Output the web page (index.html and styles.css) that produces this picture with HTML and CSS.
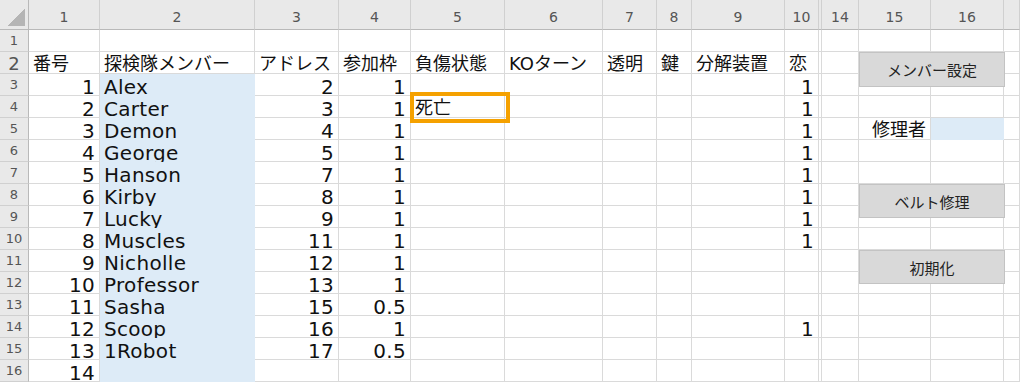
FILE: index.html
```html
<!DOCTYPE html>
<html lang="ja">
<head>
    <meta charset="UTF-8">
    <title>探検隊</title>
    <link rel="stylesheet" href="styles.css">
</head>
<body>
<div class="sheet">
    <!-- column headers -->
    <div class="row top">
        <div class="corner"></div><div>1</div><div>2</div><div>3</div><div>4</div><div>5</div><div>6</div><div>7</div><div>8</div><div>9</div><div>10</div><div class="gap"></div><div>14</div><div>15</div><div>16</div><div></div>
    </div>
    <div class="row">
        <div class="rh">1</div><div></div><div></div><div></div><div></div><div></div><div></div><div></div><div></div><div></div><div></div><div class="gap"></div><div></div><div></div><div></div><div></div>
    </div>
    <div class="row head">
        <div class="rh">2</div><div>番号</div><div>探検隊メンバー</div><div>アドレス</div><div>参加枠</div><div>負傷状態</div><div>KOターン</div><div>透明</div><div>鍵</div><div>分解装置</div><div>恋</div><div class="gap"></div><div></div><div></div><div></div><div></div>
    </div>
    <div class="row">
        <div class="rh">3</div><div class="n">1</div><div class="name">Alex</div><div class="n">2</div><div class="n">1</div><div></div><div></div><div></div><div></div><div></div><div class="n">1</div><div class="gap"></div><div></div><div></div><div></div><div></div>
    </div>
    <div class="row">
        <div class="rh">4</div><div class="n">2</div><div class="name">Carter</div><div class="n">3</div><div class="n">1</div><div class="jp">死亡</div><div></div><div></div><div></div><div></div><div class="n">1</div><div class="gap"></div><div></div><div></div><div></div><div></div>
    </div>
    <div class="row">
        <div class="rh">5</div><div class="n">3</div><div class="name">Demon</div><div class="n">4</div><div class="n">1</div><div></div><div></div><div></div><div></div><div></div><div class="n">1</div><div class="gap"></div><div></div><div class="n jp">修理者</div><div class="fill"></div><div></div>
    </div>
    <div class="row">
        <div class="rh">6</div><div class="n">4</div><div class="name">George</div><div class="n">5</div><div class="n">1</div><div></div><div></div><div></div><div></div><div></div><div class="n">1</div><div class="gap"></div><div></div><div></div><div></div><div></div>
    </div>
    <div class="row">
        <div class="rh">7</div><div class="n">5</div><div class="name">Hanson</div><div class="n">7</div><div class="n">1</div><div></div><div></div><div></div><div></div><div></div><div class="n">1</div><div class="gap"></div><div></div><div></div><div></div><div></div>
    </div>
    <div class="row">
        <div class="rh">8</div><div class="n">6</div><div class="name">Kirby</div><div class="n">8</div><div class="n">1</div><div></div><div></div><div></div><div></div><div></div><div class="n">1</div><div class="gap"></div><div></div><div></div><div></div><div></div>
    </div>
    <div class="row">
        <div class="rh">9</div><div class="n">7</div><div class="name">Lucky</div><div class="n">9</div><div class="n">1</div><div></div><div></div><div></div><div></div><div></div><div class="n">1</div><div class="gap"></div><div></div><div></div><div></div><div></div>
    </div>
    <div class="row">
        <div class="rh">10</div><div class="n">8</div><div class="name">Muscles</div><div class="n">11</div><div class="n">1</div><div></div><div></div><div></div><div></div><div></div><div class="n">1</div><div class="gap"></div><div></div><div></div><div></div><div></div>
    </div>
    <div class="row">
        <div class="rh">11</div><div class="n">9</div><div class="name">Nicholle</div><div class="n">12</div><div class="n">1</div><div></div><div></div><div></div><div></div><div></div><div></div><div class="gap"></div><div></div><div></div><div></div><div></div>
    </div>
    <div class="row">
        <div class="rh">12</div><div class="n">10</div><div class="name">Professor</div><div class="n">13</div><div class="n">1</div><div></div><div></div><div></div><div></div><div></div><div></div><div class="gap"></div><div></div><div></div><div></div><div></div>
    </div>
    <div class="row">
        <div class="rh">13</div><div class="n">11</div><div class="name">Sasha</div><div class="n">15</div><div class="n">0.5</div><div></div><div></div><div></div><div></div><div></div><div></div><div class="gap"></div><div></div><div></div><div></div><div></div>
    </div>
    <div class="row">
        <div class="rh">14</div><div class="n">12</div><div class="name">Scoop</div><div class="n">16</div><div class="n">1</div><div></div><div></div><div></div><div></div><div></div><div class="n">1</div><div class="gap"></div><div></div><div></div><div></div><div></div>
    </div>
    <div class="row">
        <div class="rh">15</div><div class="n">13</div><div class="name">1Robot</div><div class="n">17</div><div class="n">0.5</div><div></div><div></div><div></div><div></div><div></div><div></div><div class="gap"></div><div></div><div></div><div></div><div></div>
    </div>
    <div class="row">
        <div class="rh">16</div><div class="n">14</div><div class="name"></div><div></div><div></div><div></div><div></div><div></div><div></div><div></div><div></div><div class="gap"></div><div></div><div></div><div></div><div></div>
    </div>

    <!-- selected cell -->
    <div class="sel"></div>

    <!-- buttons on the sheet -->
    <div class="btn btn_miembros">メンバー設定</div>
    <div class="btn btn_reparar">ベルト修理</div>
    <div class="btn btn_reset">初期化</div>
</div>
</body>
</html>
```

FILE: styles.css
```css
* {
    box-sizing: border-box;
}

html, body {
    margin: 0;
    padding: 0;
    background-color: #fff;
}

body {
    width: 1020px;
    height: 382px;
    overflow: hidden;
    font-family: "DejaVu Sans", "Noto Sans CJK JP", sans-serif;
    color: #111;
}

.sheet {
    position: relative;
}

.row {
    display: grid;
    grid-template-columns: 29px 71px 155px 84px 72px 94px 98px 54px 35px 93px 34px 3px 37px 72px 73px 16px;
    height: 22px;
}

.row > div {
    border-right: 1px solid #dadada;
    border-bottom: 1px solid #dadada;
    white-space: nowrap;
    padding: 5px 4px 0;
    font-size: 20px;
    line-height: 16px;
    letter-spacing: 0.3px;
}

.row > .gap {
    padding: 0;
}

.row > .rh {
    padding: 1px 0 0;
    background-color: #e9e9e9;
    border-right-color: #b9b9b9;
    border-bottom-color: #d0d0d0;
    color: #555;
    font-size: 13px;
    line-height: 20px;
    letter-spacing: 0;
    text-align: center;
}

/* column header row */
.top {
    height: 30px;
}

.top > div {
    background-color: #e9e9e9;
    border-right-color: #d0d0d0 !important;
    border-bottom-color: #b9b9b9 !important;
    color: #555;
    font-size: 14px !important;
    line-height: 21px !important;
    letter-spacing: 0 !important;
    padding: 7px 0 0 !important;
    text-align: center;
}

.top > .corner {
    border-right-color: #b9b9b9 !important;
    background: linear-gradient(135deg, transparent 50%, #b5b5b5 50%) no-repeat right 3px bottom 3px / 17px 17px, #e9e9e9;
}

.head > div, .jp {
    font-size: 18px !important;
    line-height: 17px !important;
    padding-top: 3px !important;
    letter-spacing: 0 !important;
}

.n {
    text-align: right;
}

.name, .fill {
    background-color: #ddebf7;
    border-color: #ddebf7 !important;
}

.sel {
    position: absolute;
    left: 410px;
    top: 92px;
    width: 100px;
    height: 31px;
    border: 4px solid #f5a100;
}

.btn {
    position: absolute;
    left: 859px;
    width: 146px;
    height: 34px;
    background-color: #d9d9d9;
    border: 1px solid #c3c3c3;
    font-size: 15px;
    color: #222;
    display: flex;
    align-items: center;
    justify-content: center;
}

.btn_miembros {
    top: 52px;
    height: 35px;
}

.btn_reparar {
    top: 184px;
}

.btn_reset {
    top: 250px;
}
```
